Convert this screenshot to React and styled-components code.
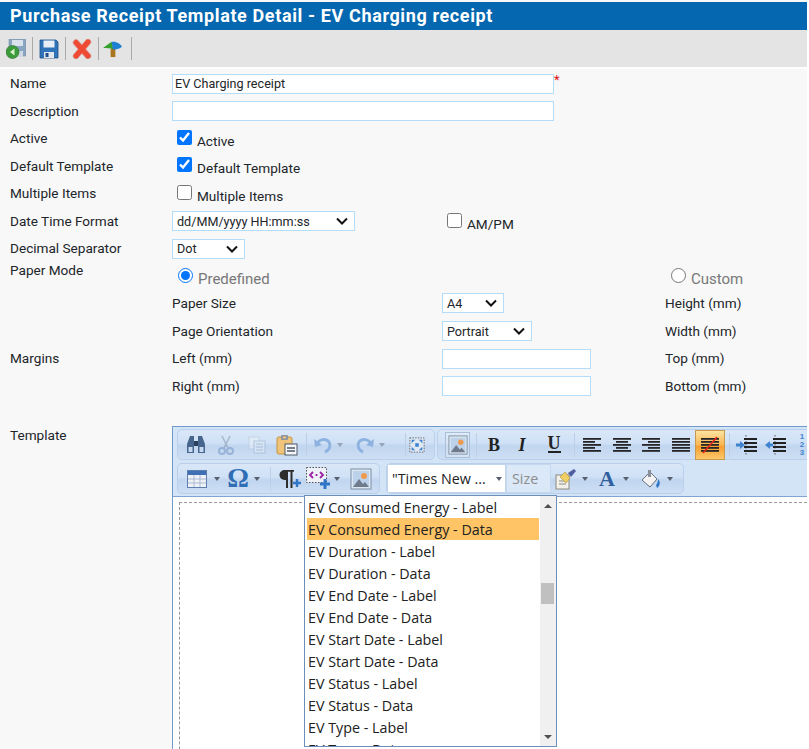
import React from "react";
import styled, { createGlobalStyle } from "styled-components";

const GlobalStyle = createGlobalStyle`
  html, body { margin: 0; padding: 0; background: #fff; }
  body { font-family: Roboto, "Liberation Sans", sans-serif; font-size: 14px; color: #212529; overflow: hidden; }
`;

const chevron =
  "url(\"data:image/svg+xml,%3Csvg xmlns='http://www.w3.org/2000/svg' width='12' height='8'%3E%3Cpath d='M1 1.5l5 5 5-5' fill='none' stroke='%23111' stroke-width='2'/%3E%3C/svg%3E\")";

const Page = styled.div`
  width: 807px;
  height: 749px;
  overflow: hidden;
  background: #f8f8f8;
  padding-top: 2px;
  box-sizing: border-box;
`;

const TitleBar = styled.h1`
  margin: 0;
  height: 28px;
  padding-left: 10px;
  background: #0467b0;
  color: #fff;
  font-size: 18px;
  font-weight: 700;
  line-height: 28px;
  letter-spacing: 0.62px;
  white-space: nowrap;
`;

const ActionBar = styled.div`
  height: 37px;
  background: #e4e4e4;
  display: flex;
  align-items: center;
`;

const ActionButton = styled.button`
  width: 33px;
  height: 23px;
  padding: 0 0 0 ${(p) => p.$pad || 6}px;
  background: none;
  border: 0;
  border-right: 1px solid #a9a9a9;
  box-sizing: border-box;
  display: flex;
  align-items: center;
  justify-content: flex-start;
  svg { display: block; }
`;

const Form = styled.div`
  padding: 1px 0 0 10px;
  border-top: 2px solid #fdfdfd;
`;

const Row = styled.div`
  display: grid;
  grid-template-columns: 162px 270px 223px 1fr;
  height: ${(p) => p.$h || 27.5}px;
  align-items: ${(p) => (p.$top ? "start" : "center")};
`;

const Label = styled.div`
  font-size: 13.6px;
  line-height: 16px;
  white-space: nowrap;
`;

const FieldLabel = styled(Label)`
  margin-top: -1.5px;
`;

const PaperLabel = styled(Label)`
  margin-top: -1px;
`;

const TemplateLabel = styled(Label)`
  padding-top: 1px;
`;

const InputWrap = styled.div`
  display: flex;
  align-items: flex-start;
  grid-column: ${(p) => (p.$wide ? "2 / 4" : "auto")};
`;

const TextInput = styled.input`
  box-sizing: border-box;
  width: ${(p) => p.$w}px;
  height: 20px;
  padding: 0 2px;
  border: 1px solid #b4dcfb;
  background: #fff;
  font-family: Roboto, sans-serif;
  font-size: 12.6px;
  color: #212529;
  outline: none;
`;

const Star = styled.span`
  color: #e01010;
  font-size: 13px;
  line-height: 12px;
`;

const Select = styled.select`
  appearance: none;
  box-sizing: border-box;
  width: ${(p) => p.$w}px;
  height: 20px;
  padding: 0 0 0 4px;
  border: 1px solid #b4dcfb;
  border-radius: 0;
  background: #fff ${chevron} no-repeat right 6px center;
  font-family: Roboto, sans-serif;
  font-size: 12.6px;
  color: #212529;
  outline: none;
`;

const Check = styled.label`
  display: flex;
  align-items: flex-start;
  padding-left: 5px;
  height: 20px;
  margin-top: ${(p) => p.$drop || 2}px;
  line-height: 16px;
  font-size: 13.6px;
  white-space: nowrap;
  input {
    width: 15px;
    height: 15px;
    margin: 0 5px 0 0;
  }
  span { padding-top: 3px; }
`;

const Radio = styled(Check)`
  color: #777;
  padding-left: 6px;
  font-size: 15px;
  margin-top: 5px;
`;

const TemplateRow = styled.div`
  display: grid;
  grid-template-columns: 162px 1fr;
  padding-top: 26px;
`;

const Editor = styled.div`
  position: relative;
  height: 323px;
  border: 1px solid #6f9bcb;
  border-right: 0;
  border-bottom: 0;
  background: #d3e4f7;
  overflow: hidden;
`;

const ToolRow = styled.div`
  display: flex;
  gap: ${(p) => p.$gap || 2}px;
  height: 32px;
  padding: 2px 0 0 4px;
  white-space: nowrap;
`;

const ToolGroup = styled.div`
  flex: none;
  display: flex;
  align-items: center;
  height: 31px;
  padding: 0 ${(p) => p.$r || 0}px 0 ${(p) => p.$l ?? 3}px;
  box-sizing: border-box;
  border: 1px solid #b9d0ec;
  border-radius: 5px;
  background: linear-gradient(#d9e7f8 0%, #d0e1f6 45%, #c0d5ef 55%, #cddff4 100%);
`;

const Tool = styled.div`
  flex: none;
  width: ${(p) => p.$w || 30}px;
  height: 27px;
  display: flex;
  align-items: center;
  justify-content: center;
  box-sizing: border-box;
  opacity: ${(p) => (p.$off ? 0.5 : 1)};
  ${(p) =>
    p.$active &&
    "height: 30px; background: linear-gradient(#fde3a0, #f9b654 50%, #f79e2f 55%, #fcc96c); border: 1px solid #c99a4c;"}
  ${(p) => p.$boxed && "height: 26px; background: rgba(255,255,255,.2); border: 1px solid #a9bfd8;"}
`;

const Letter = styled.span`
  font-family: "Liberation Serif", serif;
  font-size: ${(p) => p.$size || 18}px;
  font-weight: 700;
  font-style: ${(p) => (p.$italic ? "italic" : "normal")};
  border-bottom: ${(p) => (p.$under ? "2px solid #222" : "0")};
  color: ${(p) => p.$color || "#222"};
  line-height: ${(p) => (p.$under ? "15px" : 1)};
`;

const Digits = styled.span`
  display: flex;
  flex-direction: column;
  margin-left: 2px;
  font-family: "Liberation Sans", sans-serif;
  font-size: 8px;
  line-height: 8px;
  font-weight: 700;
  color: #3f83cf;
`;

const Caret = styled.div`
  flex: none;
  width: ${(p) => p.$w}px;
  height: 26px;
  display: flex;
  align-items: center;
  opacity: ${(p) => (p.$off ? 0.45 : 1)};
  &::before {
    content: "";
    margin-left: 1px;
    border-top: 4px solid #56606e;
    border-left: 3.5px solid transparent;
    border-right: 3.5px solid transparent;
  }
`;

const Sep = styled.div`
  flex: none;
  width: ${(p) => p.$w}px;
  height: 24px;
  position: relative;
  &::after {
    content: "";
    position: absolute;
    left: 50%;
    top: 0;
    bottom: 0;
    width: 1px;
    background: #bbcfe8;
  }
`;

const FontCombo = styled.div`
  flex: none;
  width: 119px;
  height: 29px;
  box-sizing: border-box;
  background: #fff;
  border: 1px solid #c1d5ec;
  display: flex;
  align-items: center;
  padding-left: 4px;
  font-family: "Open Sans", sans-serif;
  font-size: 14.3px;
  color: #222;
  position: relative;
  &::after {
    content: "";
    position: absolute;
    right: 3px;
    top: 12px;
    border-top: 4px solid #56606e;
    border-left: 3.5px solid transparent;
    border-right: 3.5px solid transparent;
  }
`;

const SizeCombo = styled.div`
  flex: none;
  width: 45px;
  height: 29px;
  box-sizing: border-box;
  background: #dbe8f8;
  border: 1px solid #c6d8ee;
  display: flex;
  align-items: center;
  padding-left: 5px;
  font-family: "Open Sans", sans-serif;
  font-size: 14.3px;
  color: #8d8d8d;
`;

const EditArea = styled.div`
  position: absolute;
  left: 0;
  right: 0;
  top: 69px;
  bottom: 0;
  background: #fff;
  border-top: 1px solid #7fa5d0;
  padding: 5px 0 0 6px;
  box-sizing: border-box;
`;

const Dashed = styled.div`
  height: 400px;
  border: 1px dashed #9a9a9a;
  border-right: 0;
`;

const Dropdown = styled.div`
  position: absolute;
  left: 131px;
  top: 68px;
  width: 253px;
  height: 252px;
  box-sizing: border-box;
  background: #fff;
  border: 1px solid #6b8fb9;
  display: flex;
  padding-left: 2px;
  overflow: hidden;
`;

const List = styled.div`
  width: 232px;
  flex: none;
  overflow: hidden;
`;

const Item = styled.div`
  height: 22px;
  line-height: 23px;
  padding-left: 1px;
  font-family: "Open Sans", sans-serif;
  font-size: 14.3px;
  color: #212121;
  white-space: nowrap;
  background: ${(p) => (p.$selected ? "#fec466" : "transparent")};
`;

const Scrollbar = styled.div`
  flex: none;
  width: 17px;
  margin-left: 1px;
  background: #f0f0f0;
  position: relative;
`;

const ScrollArrow = styled.div`
  position: absolute;
  left: 4px;
  ${(p) => (p.$up ? "top: 8px;" : "bottom: 7px;")}
  border-left: 4px solid transparent;
  border-right: 4px solid transparent;
  ${(p) => (p.$up ? "border-bottom: 4px solid #505050;" : "border-top: 4px solid #505050;")}
`;

const ScrollThumb = styled.div`
  position: absolute;
  left: 1px;
  top: 87px;
  width: 13px;
  height: 21px;
  background: #c0c0c0;
`;

/* top action bar icons */
const SaveBackIcon = () => (
  <svg width="20" height="20" viewBox="0 0 20 20">
    <path d="M3 0h16l1 1v16H3z" fill="#8aa5c0" stroke="#7a90a8" strokeWidth=".6" />
    <rect x="6" y="1" width="11" height="6" fill="#d9e2ec" />
    <rect x="9" y="12" width="8" height="6" fill="#d0d9e3" />
    <circle cx="6.5" cy="13" r="6.5" fill="#3b9b3b" stroke="#23742a" strokeWidth=".6" />
    <path d="M8.5 9.5v7L4 13z" fill="#d8f3c9" />
  </svg>
);

const SaveIcon = () => (
  <svg width="20" height="20" viewBox="0 0 20 20">
    <path d="M1 1h16l2 2v16H1z" fill="#2f73b8" stroke="#1d4f8c" strokeWidth=".8" />
    <rect x="4.5" y="1.5" width="11" height="7" fill="#e8eef5" />
    <rect x="5" y="13" width="10" height="6" fill="#dfe6ee" />
    <rect x="6.5" y="14" width="3" height="4" fill="#1d4f8c" />
  </svg>
);

const DeleteIcon = () => (
  <svg width="20" height="20" viewBox="0 0 20 20">
    <path d="M4 3.5l12 13.5M16 3l-12 14" stroke="#d9a79e" strokeWidth="6.5" strokeLinecap="round" />
    <path d="M4 3.5l12 13.5M16 3l-12 14" stroke="#ef4a33" strokeWidth="5" strokeLinecap="round" />
  </svg>
);

const UploadIcon = () => (
  <svg width="19" height="19" viewBox="0 0 20 20">
    <path d="M8 10h5v9H8z" fill="#a9761f" />
    <path d="M0 9.5L9 3l2 8C8 9.5 4 9.5 0 9.5z" fill="#35a02c" />
    <path d="M9 3c5-1 9 2 11 5-3 3-7 3.5-9.5 3z" fill="#1f7fd0" />
  </svg>
);

/* editor toolbar icons */
const Binoculars = () => (
  <svg width="22" height="20" viewBox="0 0 20 20">
    <path d="M4 1h4v17H1V9z" fill="#47668d" />
    <path d="M16 1h-4v17h7V9z" fill="#47668d" />
    <rect x="8" y="6" width="4" height="5" fill="#2b3f5c" />
    <rect x="2.5" y="12" width="4" height="5" fill="#c7d9ee" />
    <rect x="13.5" y="12" width="4" height="5" fill="#c7d9ee" />
  </svg>
);

const Scissors = () => (
  <svg width="18" height="20" viewBox="0 0 18 20" fill="none" stroke="#8090a6" strokeWidth="1.6">
    <path d="M5 1l6 12M13 1L7 13" />
    <circle cx="5" cy="16" r="3" stroke="#6d8fc0" strokeWidth="2" />
    <circle cx="13" cy="16" r="3" stroke="#6d8fc0" strokeWidth="2" />
  </svg>
);

const Copy = () => (
  <svg width="20" height="20" viewBox="0 0 20 20">
    <rect x="2" y="2" width="10" height="12" fill="#eef3f9" stroke="#b7c7da" />
    <rect x="7" y="6" width="11" height="12" fill="#e8eff7" stroke="#93abc8" />
    <path d="M9 9h7M9 12h7M9 15h7" stroke="#8fa8c8" />
  </svg>
);

const Paste = () => (
  <svg width="22" height="22" viewBox="0 0 22 22">
    <rect x="1" y="3" width="15" height="17" rx="2" fill="#efc47a" stroke="#c49440" />
    <rect x="5" y="1" width="7" height="5" rx="1" fill="#8d95a0" />
    <rect x="7" y="2.5" width="3" height="2" fill="#efc47a" />
    <rect x="9" y="10" width="12" height="11" fill="#f4f6f9" stroke="#4e5866" />
    <path d="M11 14h8M11 17h8" stroke="#4e5866" strokeWidth="1.4" />
  </svg>
);

const Undo = ({ flip }) => (
  <svg width="20" height="20" viewBox="0 0 20 20" style={flip ? { transform: "scaleX(-1)" } : undefined}>
    <path d="M4 9c2-5 9-6 12-2 2 3 1 8-4 10" fill="none" stroke="#8fb3e0" strokeWidth="3" />
    <path d="M1 4l1 8 7-2z" fill="#8fb3e0" />
  </svg>
);

const SelectAll = () => (
  <svg width="18" height="18" viewBox="0 0 18 18">
    <rect x="1" y="1" width="16" height="16" fill="#dfe8f3" stroke="#555" strokeDasharray="1.5 1.5" />
    <path d="M3 3h4l-4 4zM15 3h-4l4 4zM3 15h4l-4-4zM15 15h-4l4-4z" fill="#3f83cf" />
    <rect x="7" y="7" width="4" height="4" fill="#3f83cf" />
  </svg>
);

const ImageIcon = ({ size = 22 }) => (
  <svg width={size} height={size} viewBox="0 0 22 22">
    <rect x="1" y="1" width="20" height="20" fill="#dde7f2" stroke="#7d8ea3" />
    <rect x="3" y="3" width="16" height="16" fill="#bcd2ea" />
    <circle cx="14" cy="8" r="3" fill="#ef9a4a" />
    <path d="M3 19l6-8 4 5 2-2 4 5z" fill="#6f7b8c" />
  </svg>
);

const Lines = ({ rows, strike }) => (
  <svg width="20" height="20" viewBox="0 0 20 20">
    {rows.map(([x, w], i) => (
      <rect key={i} x={x} y={3 + i * 3} width={w} height="1.8" fill="#262626" />
    ))}
    {strike && <path d="M3 18L17 2" stroke="#e3261c" strokeWidth="1.6" />}
  </svg>
);

const alignLeft = [[1, 18], [1, 12], [1, 18], [1, 12], [1, 18]];
const alignCenter = [[1, 18], [4, 12], [1, 18], [4, 12], [1, 18]];
const alignRight = [[1, 18], [7, 12], [1, 18], [7, 12], [1, 18]];
const alignFull = [[1, 18], [1, 18], [1, 18], [1, 18], [1, 18]];

const Indent = ({ back }) => (
  <svg width="22" height="22" viewBox="0 0 22 22">
    <path d="M10 1v20" stroke="#555" strokeDasharray="1.5 1.5" />
    <path d="M8 5h13M8 9h13M8 13h13M8 17h13" stroke="#222" strokeWidth="1.8" />
    <path d={back ? "M0 11l5-4v2.5h3v3H5V15z" : "M0 9.5h4V7l5 4-5 4v-2.5H0z"} fill="#3f83cf" />
  </svg>
);

const TableIcon = () => (
  <svg width="20" height="18" viewBox="0 0 20 18">
    <rect x=".5" y=".5" width="19" height="17" fill="#eef2f8" stroke="#5c7fb0" />
    <rect x="1" y="1" width="18" height="4" fill="#3f6fb5" />
    <path d="M1 9h18M1 13h18M7 5v12M13 5v12" stroke="#a9b9cf" />
  </svg>
);

const PilcrowPlus = () => (
  <svg width="24" height="20" viewBox="0 0 24 20">
    <path d="M15 14h8M19 10v8" stroke="#2f76c8" strokeWidth="2.4" />
    <path d="M7 1h9v1.8h-1.5V19h-2V2.8H10V19H8v-8C4 11 1.5 9 1.5 6S4 1 7 1z" fill="#2c2c2c" />
  </svg>
);

const SpecialIcon = () => (
  <svg width="26" height="24" viewBox="0 0 26 24">
    <rect x=".5" y=".5" width="20" height="15" fill="#eef2f8" stroke="#555" strokeDasharray="1.5 1.5" />
    <path d="M7 5L4 8l3 3M14 5l3 3-3 3" fill="none" stroke="#9b1fa5" strokeWidth="1.8" />
    <path d="M10.5 7v2" stroke="#9b1fa5" strokeWidth="1.8" />
    <path d="M14 17h10M19 12v10" stroke="#2f76c8" strokeWidth="3" />
  </svg>
);

const Brush = () => (
  <svg width="22" height="22" viewBox="0 0 22 22">
    <rect x="1" y="7" width="13" height="14" fill="#f1f1ea" stroke="#8a8a80" />
    <path d="M4 13h7M4 16h7" stroke="#8a8a80" />
    <path d="M5 9l5-5 5 6-4 5z" fill="#f0cf63" stroke="#a8893a" strokeWidth=".6" />
    <path d="M13 5l6-4 2 2-5 6z" fill="#4f5fa0" />
  </svg>
);

const FillIcon = () => (
  <svg width="22" height="22" viewBox="0 0 22 22">
    <path d="M2 12l8-8 7 7-7 8z" fill="#f3f3f3" stroke="#67717f" />
    <path d="M8 2h3v7H8z" fill="#8a8f98" />
    <path d="M18 11c3 3 2 7-1 9l-1-3c1-1 2-3 2-6z" fill="#2f76c8" />
  </svg>
);

const items = [
  "EV Consumed Energy - Label",
  "EV Consumed Energy - Data",
  "EV Duration - Label",
  "EV Duration - Data",
  "EV End Date - Label",
  "EV End Date - Data",
  "EV Start Date - Label",
  "EV Start Date - Data",
  "EV Status - Label",
  "EV Status - Data",
  "EV Type - Label",
  "EV Type - Data",
];

function EditorToolbars() {
  return (
    <>
      <ToolRow>
        <ToolGroup $r={9}>
          <Tool $w={30}><Binoculars /></Tool>
          <Tool $w={30} $off><Scissors /></Tool>
          <Tool $w={31} $off><Copy /></Tool>
          <Tool $w={30}><Paste /></Tool>
          <Sep $w={8} />
          <Tool $w={26}><Undo /></Tool>
          <Caret $w={16} $off />
          <Tool $w={26}><Undo flip /></Tool>
          <Caret $w={23} $off />
          <Sep $w={8} />
          <Tool $w={16}><SelectAll /></Tool>
        </ToolGroup>
        <ToolGroup $l={7}>
          <Tool $w={25} $boxed><ImageIcon size={20} /></Tool>
          <Sep $w={11} />
          <Tool $w={26}><Letter>B</Letter></Tool>
          <Tool $w={30}><Letter $italic>I</Letter></Tool>
          <Tool $w={34}><Letter $under>U</Letter></Tool>
          <Sep $w={6} />
          <Tool $w={30}><Lines rows={alignLeft} /></Tool>
          <Tool $w={29}><Lines rows={alignCenter} /></Tool>
          <Tool $w={30}><Lines rows={alignRight} /></Tool>
          <Tool $w={29}><Lines rows={alignFull} /></Tool>
          <Tool $w={30} $active><Lines rows={alignFull} strike /></Tool>
          <Sep $w={8} />
          <Tool $w={28}><Indent /></Tool>
          <Tool $w={30}><Indent back /></Tool>
          <Tool $w={20}><Digits><span>1</span><span>2</span><span>3</span></Digits></Tool>
        </ToolGroup>
      </ToolRow>
      <ToolRow $gap={6}>
        <ToolGroup $r={6}>
          <Tool $w={32}><TableIcon /></Tool>
          <Caret $w={10} />
          <Tool $w={30}><Letter $size={27} $color="#2f6db5">Ω</Letter></Tool>
          <Caret $w={13} />
          <Sep $w={8} />
          <Tool $w={31}><PilcrowPlus /></Tool>
          <Tool $w={28}><SpecialIcon /></Tool>
          <Caret $w={16} />
          <Tool $w={24}><ImageIcon /></Tool>
        </ToolGroup>
        <ToolGroup $l={0} $r={3}>
          <FontCombo>"Times New ...</FontCombo>
          <SizeCombo>Size</SizeCombo>
          <Tool $w={30}><Brush /></Tool>
          <Caret $w={11} />
          <Tool $w={30}><Letter $size={22} $color="#2f5f9e">A</Letter></Tool>
          <Caret $w={14} />
          <Tool $w={30}><FillIcon /></Tool>
          <Caret $w={14} />
        </ToolGroup>
      </ToolRow>
    </>
  );
}

export default function App() {
  return (
    <Page>
      <GlobalStyle />
      <TitleBar>Purchase Receipt Template Detail - EV Charging receipt</TitleBar>
      <ActionBar>
        <ActionButton><SaveBackIcon /></ActionButton>
        <ActionButton><SaveIcon /></ActionButton>
        <ActionButton><DeleteIcon /></ActionButton>
        <ActionButton $pad={4}><UploadIcon /></ActionButton>
      </ActionBar>
      <Form>
        <Row>
          <FieldLabel>Name</FieldLabel>
          <InputWrap $wide>
            <TextInput $w={382} defaultValue="EV Charging receipt" />
            <Star>*</Star>
          </InputWrap>
        </Row>
        <Row>
          <FieldLabel>Description</FieldLabel>
          <InputWrap $wide>
            <TextInput $w={382} />
          </InputWrap>
        </Row>
        <Row>
          <FieldLabel>Active</FieldLabel>
          <Check><input type="checkbox" defaultChecked /><span>Active</span></Check>
        </Row>
        <Row>
          <FieldLabel>Default Template</FieldLabel>
          <Check><input type="checkbox" defaultChecked /><span>Default Template</span></Check>
        </Row>
        <Row>
          <FieldLabel>Multiple Items</FieldLabel>
          <Check><input type="checkbox" /><span>Multiple Items</span></Check>
        </Row>
        <Row>
          <FieldLabel>Date Time Format</FieldLabel>
          <InputWrap>
            <Select $w={183}><option>dd/MM/yyyy HH:mm:ss</option></Select>
          </InputWrap>
          <Check $drop={3}><input type="checkbox" /><span>AM/PM</span></Check>
        </Row>
        <Row>
          <FieldLabel>Decimal Separator</FieldLabel>
          <InputWrap>
            <Select $w={73}><option>Dot</option></Select>
          </InputWrap>
        </Row>
        <Row $h={27} $top>
          <PaperLabel>Paper Mode</PaperLabel>
          <Radio><input type="radio" name="mode" defaultChecked /><span>Predefined</span></Radio>
          <div />
          <Radio><input type="radio" name="mode" /><span>Custom</span></Radio>
        </Row>
        <Row>
          <div />
          <Label>Paper Size</Label>
          <InputWrap>
            <Select $w={62}><option>A4</option></Select>
          </InputWrap>
          <Label>Height (mm)</Label>
        </Row>
        <Row $h={28}>
          <div />
          <Label>Page Orientation</Label>
          <InputWrap>
            <Select $w={90}><option>Portrait</option></Select>
          </InputWrap>
          <Label>Width (mm)</Label>
        </Row>
        <Row>
          <FieldLabel>Margins</FieldLabel>
          <FieldLabel>Left (mm)</FieldLabel>
          <InputWrap>
            <TextInput $w={149} />
          </InputWrap>
          <FieldLabel>Top (mm)</FieldLabel>
        </Row>
        <Row>
          <div />
          <Label>Right (mm)</Label>
          <InputWrap>
            <TextInput $w={149} />
          </InputWrap>
          <Label>Bottom (mm)</Label>
        </Row>
        <TemplateRow>
          <TemplateLabel>Template</TemplateLabel>
          <Editor>
            <EditorToolbars />
            <EditArea>
              <Dashed />
            </EditArea>
            <Dropdown>
              <List>
                {items.map((item, i) => (
                  <Item key={item} $selected={i === 1}>{item}</Item>
                ))}
              </List>
              <Scrollbar>
                <ScrollArrow $up />
                <ScrollThumb />
                <ScrollArrow />
              </Scrollbar>
            </Dropdown>
          </Editor>
        </TemplateRow>
      </Form>
    </Page>
  );
}
